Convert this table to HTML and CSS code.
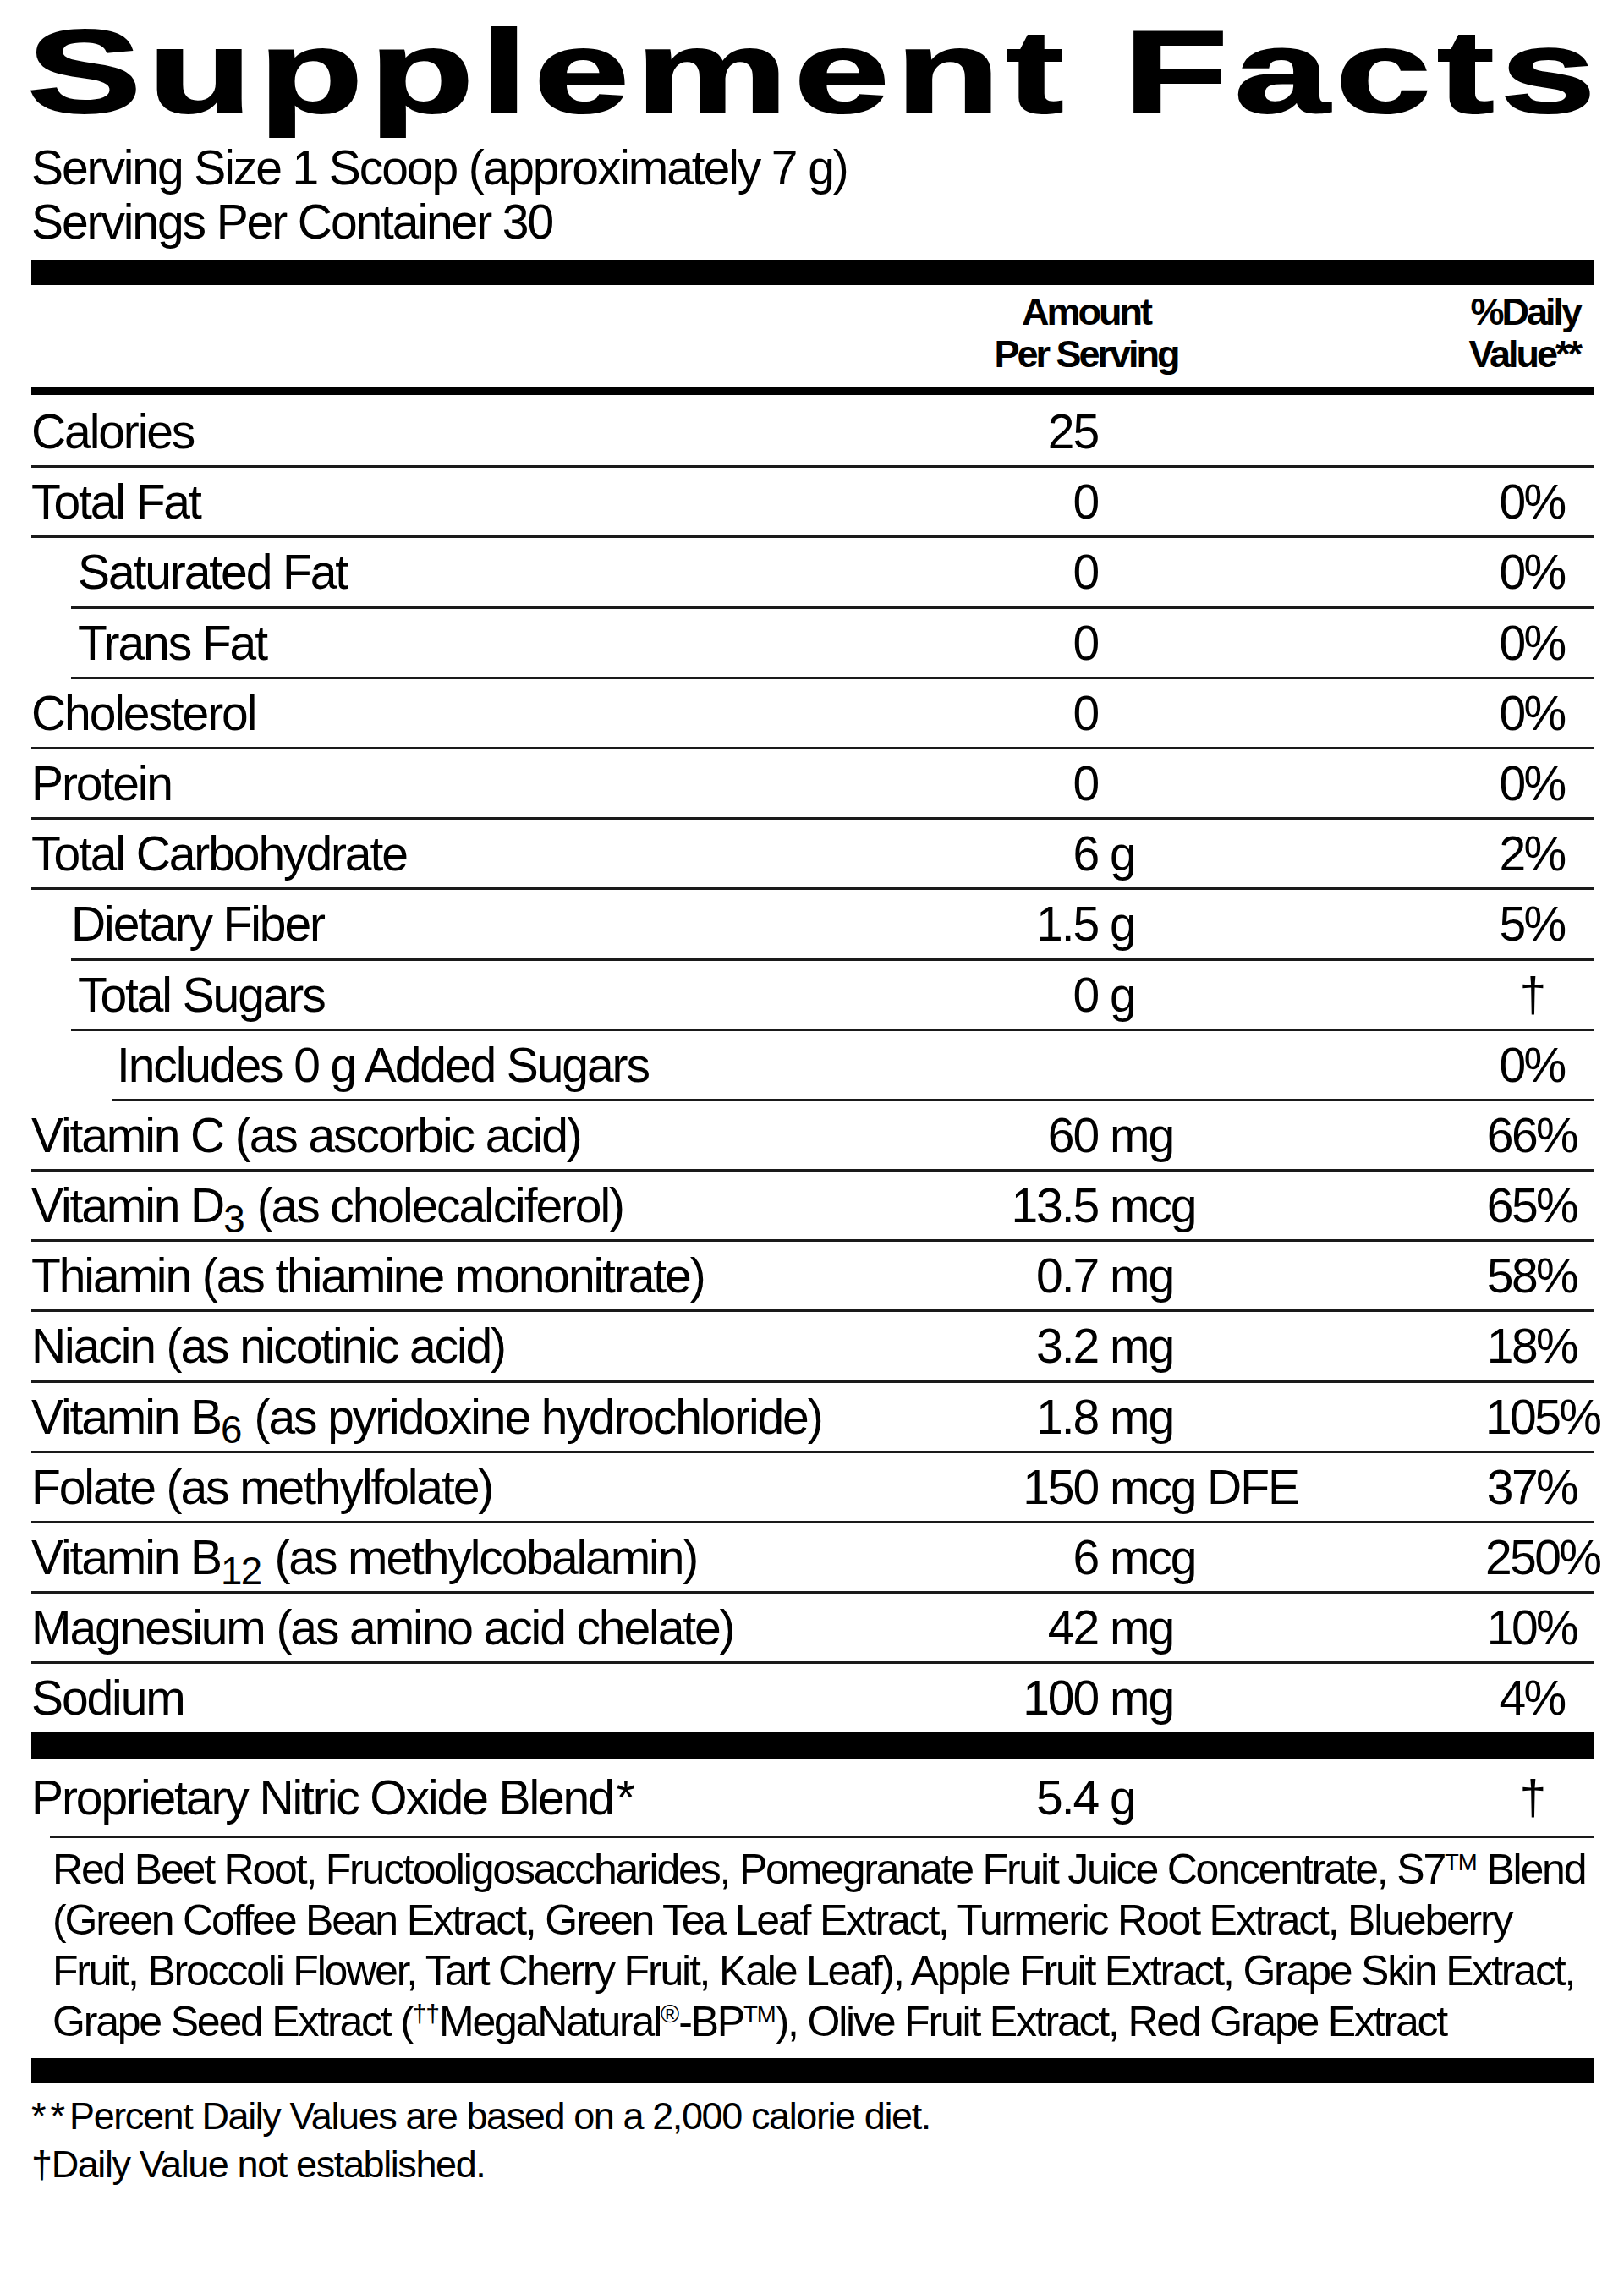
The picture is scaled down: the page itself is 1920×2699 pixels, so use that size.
FILE: index.html
```html
<!DOCTYPE html>
<html lang="en">
<head>
<meta charset="utf-8">
<title>Supplement Facts</title>
<link rel="stylesheet" href="styles.css">
</head>
<body>
<div class="label">
  <h1 class="title"><span class="title-text">Supplement Facts</span></h1>
  <div class="serving">
    <div>Serving Size 1 Scoop (approximately 7 g)</div>
    <div>Servings Per Container 30</div>
  </div>
  <div class="bar bar-top"></div>
  <div class="head">
    <div></div>
    <div class="head-amt">Amount<br>Per Serving</div>
    <div class="head-dv">%Daily<br>Value**</div>
  </div>
  <div class="rows">
    <div class="row"><span class="name">Calories</span><span class="num">25</span><span class="unit"></span><span class="dv"></span></div>
    <div class="row"><span class="name">Total Fat</span><span class="num">0</span><span class="unit"></span><span class="dv">0%</span></div>
    <div class="row l1"><span class="name">Saturated Fat</span><span class="num">0</span><span class="unit"></span><span class="dv">0%</span></div>
    <div class="row l1"><span class="name">Trans Fat</span><span class="num">0</span><span class="unit"></span><span class="dv">0%</span></div>
    <div class="row"><span class="name">Cholesterol</span><span class="num">0</span><span class="unit"></span><span class="dv">0%</span></div>
    <div class="row"><span class="name">Protein</span><span class="num">0</span><span class="unit"></span><span class="dv">0%</span></div>
    <div class="row"><span class="name">Total Carbohydrate</span><span class="num">6</span><span class="unit">g</span><span class="dv">2%</span></div>
    <div class="row l1 flush"><span class="name">Dietary Fiber</span><span class="num">1.5</span><span class="unit">g</span><span class="dv">5%</span></div>
    <div class="row l1"><span class="name">Total Sugars</span><span class="num">0</span><span class="unit">g</span><span class="dv">†</span></div>
    <div class="row l2"><span class="name">Includes 0 g Added Sugars</span><span class="num"></span><span class="unit"></span><span class="dv">0%</span></div>
    <div class="row"><span class="name">Vitamin C (as ascorbic acid)</span><span class="num">60</span><span class="unit">mg</span><span class="dv">66%</span></div>
    <div class="row"><span class="name">Vitamin D<span class="sub">3</span> (as cholecalciferol)</span><span class="num">13.5</span><span class="unit">mcg</span><span class="dv">65%</span></div>
    <div class="row"><span class="name">Thiamin (as thiamine mononitrate)</span><span class="num">0.7</span><span class="unit">mg</span><span class="dv">58%</span></div>
    <div class="row"><span class="name">Niacin (as nicotinic acid)</span><span class="num">3.2</span><span class="unit">mg</span><span class="dv">18%</span></div>
    <div class="row"><span class="name">Vitamin B<span class="sub">6</span> (as pyridoxine hydrochloride)</span><span class="num">1.8</span><span class="unit">mg</span><span class="dv">105%</span></div>
    <div class="row"><span class="name">Folate (as methylfolate)</span><span class="num">150</span><span class="unit">mcg DFE</span><span class="dv">37%</span></div>
    <div class="row"><span class="name">Vitamin B<span class="sub">12</span> (as methylcobalamin)</span><span class="num">6</span><span class="unit">mcg</span><span class="dv">250%</span></div>
    <div class="row"><span class="name">Magnesium (as amino acid chelate)</span><span class="num">42</span><span class="unit">mg</span><span class="dv">10%</span></div>
    <div class="row last"><span class="name">Sodium</span><span class="num">100</span><span class="unit">mg</span><span class="dv">4%</span></div>
  </div>
  <div class="bar"></div>
  <div class="row blend"><span class="name">Proprietary Nitric Oxide Blend<span class="ast">*</span></span><span class="num">5.4</span><span class="unit">g</span><span class="dv">†</span></div>
  <p class="blend-desc">Red Beet Root, Fructooligosaccharides, Pomegranate Fruit Juice Concentrate, S7<span class="tm">TM</span> Blend<br>(Green Coffee Bean Extract, Green Tea Leaf Extract, Turmeric Root Extract, Blueberry<br>Fruit, Broccoli Flower, Tart Cherry Fruit, Kale Leaf), Apple Fruit Extract, Grape Skin Extract,<br>Grape Seed Extract (<span class="sup">††</span>MegaNatural<span class="sup">®</span>-BP<span class="tm">TM</span>), Olive Fruit Extract, Red Grape Extract</p>
  <div class="bar bar-bottom"></div>
  <div class="notes">
    <div><span class="stars">**</span>Percent Daily Values are based on a 2,000 calorie diet.</div>
    <div>†Daily Value not established.</div>
  </div>
</div>
</body>
</html>
```

FILE: styles.css
```css
html, body {
  margin: 0;
  padding: 0;
  background: #ffffff;
}

body {
  color: #000000;
  font-family: "Liberation Sans", Arial, sans-serif;
}

.label {
  width: 1847px;
  margin-left: 37px;
  padding-bottom: 60px;
}

.title {
  margin: 15px 0 0 -5px;
  height: 140px;
  font-size: 140px;
  line-height: 140px;
  font-weight: 700;
  white-space: nowrap;
}

.title-text {
  display: inline-block;
  letter-spacing: 5px;
  transform: scaleX(1.448);
  transform-origin: 0 50%;
  -webkit-text-stroke: 2px #000;
}

.serving {
  margin-top: 11px;
  font-size: 57px;
  line-height: 64px;
  letter-spacing: -2.1px;
  white-space: nowrap;
}

.bar {
  height: 31px;
  background: #000;
}

.bar-top {
  margin-top: 13px;
  height: 30px;
}

.bar-bottom {
  height: 30px;
}

.head {
  display: grid;
  grid-template-columns: 1063px 360px 1fr;
  padding: 7px 0 13px;
  border-bottom: 10px solid #000;
  font-size: 45px;
  line-height: 50px;
  font-weight: 700;
  letter-spacing: -3px;
  white-space: nowrap;
}

.head-amt {
  text-align: center;
  padding-left: 8px;
}

.head-dv {
  text-align: right;
  padding-right: 16px;
}

.rows {
  padding-top: 3px;
}

.row {
  display: grid;
  grid-template-columns: 1fr 198px 458px 128px;
  height: 80.2px;
  border-bottom: 3px solid #1a1a1a;
  font-size: 57px;
  line-height: 80px;
  letter-spacing: -2.1px;
  white-space: nowrap;
}

.row.last {
  border-bottom: 0;
}

.row.l1 {
  margin-left: 47px;
}

.row.l1 .name {
  padding-left: 8px;
}

.row.l1.flush .name {
  padding-left: 0;
}

.row.l2 {
  margin-left: 96px;
}

.row.l2 .name {
  padding-left: 5px;
}

.num {
  text-align: right;
}

.unit {
  padding-left: 14px;
}

.dv {
  text-align: center;
  padding-right: 18px;
  letter-spacing: -2.6px;
}

.sub {
  font-size: 0.8em;
  line-height: 1;
  vertical-align: -0.26em;
  letter-spacing: -1.5px;
  padding-right: 2px;
}

.row.blend {
  height: 80px;
  padding-top: 6px;
  padding-bottom: 5px;
  border-bottom: 0;
}

.ast {
  padding-left: 4px;
}

.blend-desc {
  margin: 0 0 13px 22px;
  padding: 7px 0 0 3px;
  border-top: 3px solid #1a1a1a;
  font-size: 50px;
  line-height: 60px;
  letter-spacing: -2.2px;
  white-space: nowrap;
}

.tm {
  font-size: 0.55em;
  line-height: 1;
  vertical-align: 0.6em;
  letter-spacing: -1px;
}

.sup {
  font-size: 0.6em;
  line-height: 1;
  vertical-align: 0.55em;
  letter-spacing: -1px;
}

.notes {
  padding-top: 10px;
  font-size: 45px;
  line-height: 57px;
  letter-spacing: -1.4px;
  white-space: nowrap;
}

.stars {
  letter-spacing: 5px;
}
```
